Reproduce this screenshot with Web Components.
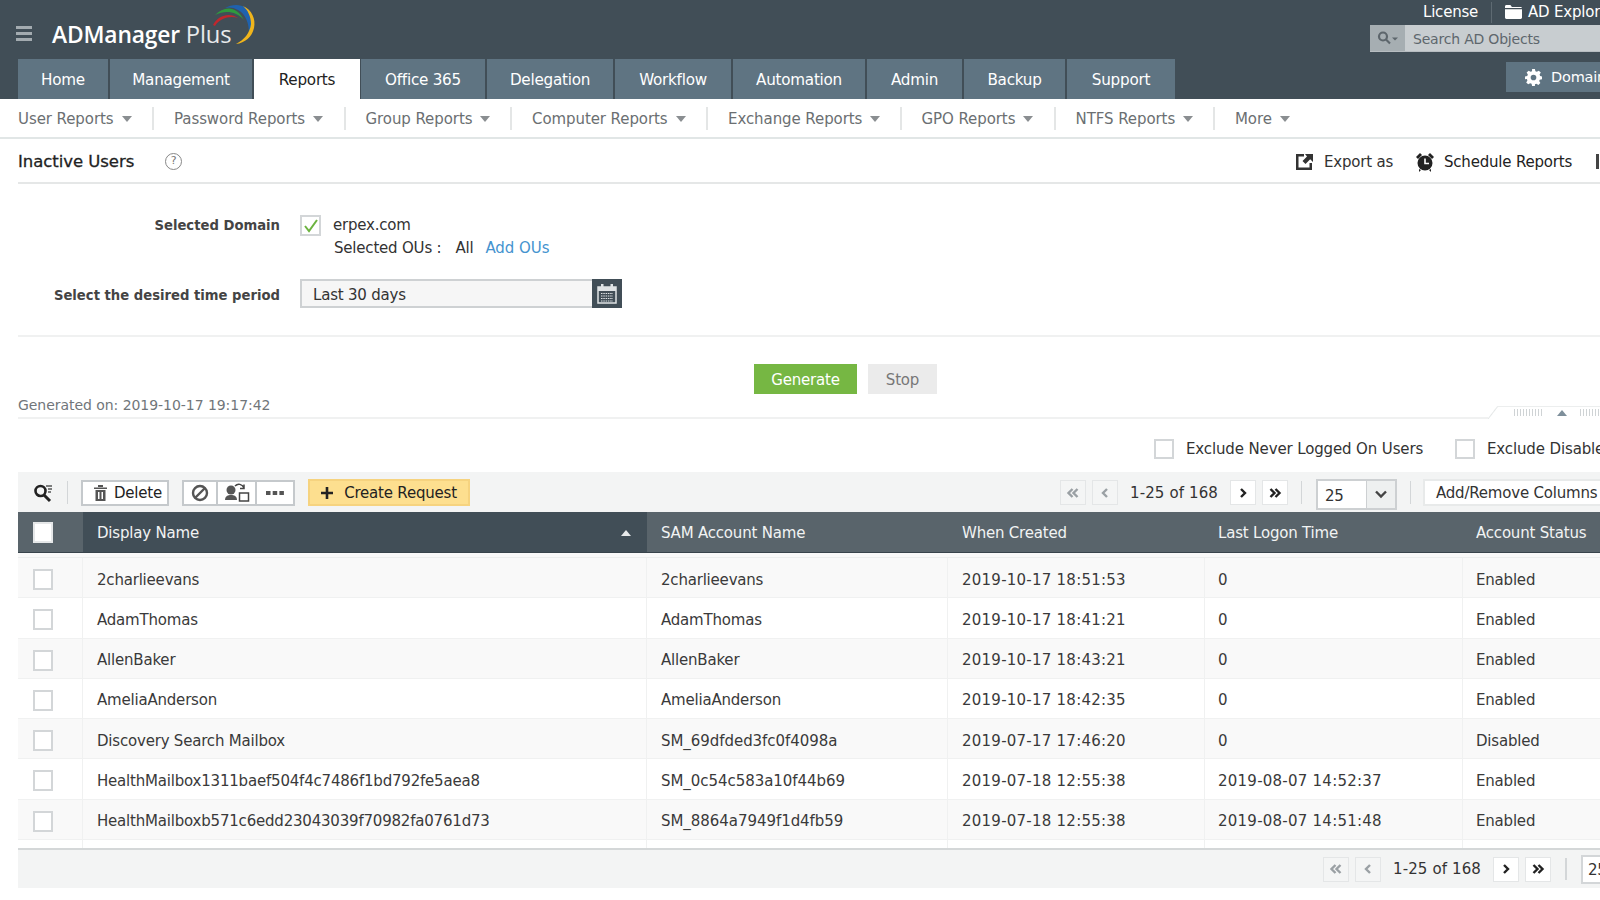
<!DOCTYPE html>
<html lang="en"><head><meta charset="utf-8"><title>ADManager Plus - Inactive Users</title>
<style>
html,body{margin:0;padding:0;background:#fff;width:1600px;height:900px;overflow:hidden}
body{font:15px/1.2 "DejaVu Sans",sans-serif;letter-spacing:-.2px;color:#333}
</style></head><body>
<am-header></am-header>
<am-subnav></am-subnav>
<am-titlebar></am-titlebar>
<am-filter></am-filter>
<am-options></am-options>
<am-toolbar></am-toolbar>
<am-table></am-table>
<am-footer></am-footer>
<script>
const el=(tag,css,html)=>{customElements.define(tag,class extends HTMLElement{constructor(){super();this.attachShadow({mode:'open'}).innerHTML='<style>'+css+'</style>'+(typeof html==='function'?html():html)}})};
const chev=(d,c)=>`<svg width="14" height="12" viewBox="0 0 14 12" fill="none" stroke="${c}" stroke-width="2.4">${d}</svg>`;
const pager=()=>{const a='#9aa0a4',b='#222';return `
<span class="pg dis">${chev('<path d="M6.5 2 2.5 6l4 4M11.5 2l-4 4 4 4"/>',a)}</span>
<span class="pg dis">${chev('<path d="M9 2 5 6l4 4"/>',a)}</span>
<span class="pt">1-25 of 168</span>
<span class="pg">${chev('<path d="M5 2l4 4-4 4"/>',b)}</span>
<span class="pg">${chev('<path d="M2.5 2l4 4-4 4M7.5 2l4 4-4 4"/>',b)}</span>`};
const pagerCss=`.pg{box-sizing:border-box;flex:none;width:26px;height:25px;border:1px solid #e4e6e7;background:#fff;display:flex;align-items:center;justify-content:center}.pg.dis{background:#f4f5f5}.pt{flex:none;width:87px;margin:0 13px 0 12px;white-space:nowrap;color:#333;letter-spacing:.12px}`;

el('am-header',`:host{display:block;height:99px;background:#414e57;overflow:hidden;color:#fff}
.top{display:flex;height:59px}
.burger{margin:25px 0 0 16px;width:16px;height:17px;flex:none;display:flex;flex-direction:column;justify-content:space-between;padding:1px 0;box-sizing:border-box}
.burger i{display:block;height:3px;background:#a3abb0}
.logo{margin:19px 0 0 20px;width:170px;font:600 22.8px/30px "Open Sans",sans-serif;letter-spacing:-.15px;flex:none;white-space:nowrap;height:30px}
.logo span{font-weight:400;font-size:23.8px;color:#e8ebec}
.arc{flex:none;margin:0 0 0 -10px;width:46px;height:46px}
.right{margin-left:auto;flex:0 0 230px;width:230px;overflow:hidden;white-space:nowrap}
.links{display:flex;align-items:center;height:22px;margin-top:1px;margin-left:53px;font-size:15px}
.links b{font-weight:400;width:68px;flex:none}
.links i{flex:none;width:1px;height:21px;background:#5e6a72;margin-right:13px}
.links svg{flex:none;margin-right:6px}
.search{display:flex;height:27px;margin-top:2px;border-bottom:1px solid #b7bdc1;box-sizing:border-box}
.search span{flex:0 0 35px;background:#a6aeb2;display:flex;align-items:center;justify-content:center}
.search em{flex:1;background:#c8cdd0;color:#5e676d;font-style:normal;padding-left:8px;line-height:28px;font-size:14px}
.tabs{display:flex;height:40px;padding-left:18px}
.tab{flex:none;background:#5f7482;margin-right:2px;display:flex;align-items:center;justify-content:center;font-size:15.2px;white-space:nowrap;letter-spacing:-.25px;padding-top:2px;box-sizing:border-box}
.tab.on{background:#fff;color:#222;margin-right:1px}
.dom{margin:3px 0 0 auto;width:94px;height:30px;background:#5f7482;display:flex;align-items:center;overflow:hidden;white-space:nowrap;padding:2px 0 0 19px;box-sizing:border-box;gap:9px;font-size:14.5px;flex:none}
.dom svg{flex:none;margin-top:-2px}
`,()=>`<div class="top"><div class="burger"><i></i><i></i><i></i></div>
<div class="logo">ADManager <span>Plus</span></div>
<svg class="arc" viewBox="0 0 46 46"><path d="M1 25C6 15 18 12 26 18 18 15.500 8 18 3 26Z" fill="#c0272d"/><path d="M3 15C12 6 24 5 32 20 24 11 13 10 3 15Z" fill="#2f9a3e"/><path d="M13 8C24 2 36 5 39 16 41 22 40 28 37 33 37 24 34 14 26 10 21 7 17 7 13 8Z" fill="#1f62ae"/><path d="M31 6C40 10 44 19 42 28 40 37 33 43 24 44 32 40 38 33 39 24 39 17 36 10 31 6Z" fill="#f0b51c"/></svg>
<div class="right"><div class="links"><b>License</b><i></i><svg width="17" height="14" viewBox="0 0 17 14" fill="#fff"><path d="M0 3V1.5C0 .7.6 0 1.4 0h4l1.5 2h8.700C16.400 2 17 2.600 17 3.300V3zM0 4.200h17V12.600c0 .8-.6 1.400-1.400 1.400H1.400C.6 14 0 13.400 0 12.600z"/></svg>AD Explorer</div>
<div class="search"><span><svg width="22" height="14" viewBox="0 0 22 14" fill="none" stroke="#5d666c" stroke-width="2.200"><circle cx="6" cy="5.500" r="4"/><path d="M9 8.500l4 4"/><path d="M15 6.500h6l-3 3z" fill="#5d666c" stroke="none"/></svg></span><em>Search AD Objects</em></div></div></div>
<div class="tabs">${[['Home',90],['Management',142],['Reports',106,1],['Office 365',124],['Delegation',126],['Workflow',116],['Automation',132],['Admin',95],['Backup',101],['Support',108]].map(t=>`<div class="tab${t[2]?' on':''}" style="width:${t[1]}px">${t[0]}</div>`).join('')}
<div class="dom"><svg width="17" height="17" viewBox="0 0 24 24" fill="#fff"><path fill-rule="evenodd" d="M10 0h4l.7 3.200 2 .8L19.500 2.300l2.800 2.800-1.700 2.800.8 2L24 10.600v3.800l-3.200.6-.8 2 1.700 2.800-2.800 2.800-2.800-1.700-2 .8L14 24h-4l-.7-3.200-2-.8-2.800 1.700-2.800-2.800 1.700-2.800-.8-2L0 14.400v-3.800l3.200-.7.8-2L2.300 5.100 5.100 2.300 7.900 4l2-.8zM12 8a4 4 0 1 0 0 8 4 4 0 0 0 0-8z"/></svg>Domain Settings</div></div>`);

el('am-subnav',`:host{display:block;height:40px;border-bottom:2px solid #e1e6e6;box-sizing:border-box;padding-left:18px}
.w{display:flex;align-items:center;height:38px;color:#6b6f72;white-space:nowrap;letter-spacing:-.08px}
.it{display:flex;align-items:center;flex:none;padding-top:2px;box-sizing:border-box}
.it i{width:0;height:0;border:5px solid transparent;border-top:6px solid #8a8e91;border-bottom:0;margin-left:8px}
.s{flex:none;width:2px;height:23px;background:#e4e6e6}`,()=>{
const items=[['User Reports',134],['Password Reports',169.5],['Group Reports',144.5],['Computer Reports',174],['Exchange Reports',171.5],['GPO Reports',132],['NTFS Reports',137.5],['More',0]];
return `<div class="w">${items.map((t,i)=>`<div class="it" style="${t[1]?'width:'+t[1]+'px':''}"><span>${t[0]}</span><i></i></div>${t[1]?'<div class="s"></div><div style="width:20px;flex:none"></div>':''}`).join('')}</div>`});

el('am-titlebar',`:host{display:flex;align-items:center;height:45px;margin-left:18px;border-bottom:2px solid #e5e7e7;padding-top:2px;box-sizing:border-box;white-space:nowrap;color:#222;overflow:hidden}
h1{margin:0;font:inherit;font-size:16.500px;font-weight:400;letter-spacing:-.05px;-webkit-text-stroke:.3px #222;width:147px;flex:none}
.q{flex:none;width:17px;height:17px;border:1.500px solid #888;border-radius:50%;box-sizing:border-box;font-size:11px;color:#777;text-align:center;line-height:14px}
.r{margin-left:auto;display:flex;align-items:center;width:304px;flex:none}
.r svg{flex:none}`,`<h1>Inactive Users</h1><span class="q">?</span>
<div class="r"><svg width="17" height="17" viewBox="0 0 17 17" fill="#333"><path d="M0 1h8v2.500H2.500v11h11V10H16v7H0z"/><path d="M9 1h8v8l-2.800-2.800L9.500 11 6.500 8l4.500-4.500z"/></svg><span style="margin:0 22px 0 11px;color:#333;width:70px;flex:none">Export as</span>
<svg width="18" height="20" viewBox="0 0 18 20" fill="#222"><circle cx="9" cy="11" r="7.500"/><path d="M0 5l4-4 2 2-4 4zM18 5l-4-4-2 2 4 4zM3 17l2 1-2 2zM15 17l-2 1 2 2z"/><path d="M9 6.500V11.500H13" stroke="#fff" stroke-width="1.600" fill="none"/></svg><span style="margin-left:10px;width:131px;flex:none">Schedule Reports</span><i style="width:3px;height:15px;background:#444;margin-left:21px;flex:none"></i></div>`);

el('am-filter',`:host{display:block;margin-left:18px;white-space:nowrap}
.top{height:153px;border-bottom:2px solid #f0f1f1;box-sizing:border-box;position:relative}
.row{display:flex}
.lb{flex:none;width:262px;text-align:right;font-weight:700;color:#444;font-size:13.200px;letter-spacing:0}
.cb{flex:none;box-sizing:border-box;width:21px;height:21px;border:2px solid #d3d6d8;background:#fff;margin:0 12px 0 20px;display:flex;align-items:center;justify-content:center}
.a{color:#4593cf}
.inp{flex:none;box-sizing:border-box;width:292px;height:29px;margin-left:20px;border:2px solid #ced1d3;border-right:0;background:#f6f6f6;line-height:28px;padding-left:11px;color:#333}
.cal{flex:none;width:30px;height:29px;background:#414e57;display:flex;align-items:center;justify-content:center}
.btns{display:flex;justify-content:flex-start;padding-left:736px;height:30px;margin-top:27px}
.btn{flex:none;display:flex;align-items:center;justify-content:center;padding-top:1px;box-sizing:border-box}
.gen{width:103px;background:#76b743;color:#fff}
.stop{width:69px;background:#ebebeb;color:#777;margin-left:11px}
.gn{color:#71767a;font-size:14px;letter-spacing:-.05px;line-height:22px;border-bottom:2px solid #f0f1f1;box-sizing:border-box}
.gw{position:relative}
.col{position:absolute;right:0;bottom:0;width:112px;height:13px;display:flex;align-items:center;padding-left:26px;box-sizing:border-box;background:linear-gradient(#eceeee,#eceeee) 9px 0/103px 1px no-repeat,linear-gradient(to top left,transparent calc(50% - 1px),#e4e7e7 50%,transparent calc(50% + 1px)) 0 0/10px 13px no-repeat,#fff}
.dots{flex:none;width:30px;height:7px;background:repeating-linear-gradient(90deg,#cfd3d5 0 1px,transparent 1px 3px)}
.tri{flex:none;margin:0 13px;width:0;height:0;border:5px solid transparent;border-bottom:6px solid #7e8f9b;border-top:0}`,
`<div class="top"><div class="row" style="padding-top:31px;height:21px"><span class="lb" style="line-height:21px">Selected Domain</span><span class="cb"><svg width="16" height="14" viewBox="0 0 16 14" fill="none" stroke="#6cb33f" stroke-width="2"><path d="M2 7l4 5 8-11"/></svg></span><span style="line-height:21px">erpex.com</span></div>
<div style="padding-left:316px;margin-top:2px;line-height:20px">Selected OUs :<span style="margin-left:14px">All</span><span class="a" style="margin-left:12px;letter-spacing:-.05px">Add OUs</span></div>
<div class="row" style="margin-top:21px;height:29px;align-items:center"><span class="lb" style="padding-top:4px">Select the desired time period</span><span class="inp">Last 30 days</span><span class="cal"><svg width="20" height="20" viewBox="0 0 20 20"><rect x="1" y="3" width="18" height="16" fill="none" stroke="#dfe3e5" stroke-width="1.500"/><rect x="1" y="3" width="18" height="4" fill="#dfe3e5"/><rect x="4" y="0" width="2.500" height="5" fill="#dfe3e5"/><rect x="13.500" y="0" width="2.500" height="5" fill="#dfe3e5"/><path d="M4 9.500h12M4 12h12M4 14.500h12M4 17h12" stroke="#dfe3e5" stroke-width="1.200" stroke-dasharray="1.500 .8"/></svg></span></div></div>
<div class="btns"><span class="btn gen">Generate</span><span class="btn stop">Stop</span></div>
<div class="gw"><div class="gn" style="height:25px">Generated on: 2019-10-17 19:17:42</div><div class="col"><span class="dots"></span><span class="tri"></span><span class="dots"></span></div></div>`);

el('am-options',`:host{display:flex;align-items:center;height:53px;padding:7px 0 0 1154px;box-sizing:border-box;white-space:nowrap;overflow:hidden;letter-spacing:-.13px}
.cb{flex:none;box-sizing:border-box;width:20px;height:20px;border:2px solid #d3d6d8;background:#fff;margin-right:12px}`,
`<span class="cb"></span><span style="width:269px;flex:none">Exclude Never Logged On Users</span><span class="cb"></span><span>Exclude Disabled Users</span>`);

el('am-toolbar',`:host{display:flex;align-items:center;height:40px;margin-left:18px;padding-top:1px;box-sizing:border-box;background:#f3f4f4;white-space:nowrap;overflow:hidden}
.sr{flex:none;margin-left:15px;width:20px}
.sp{flex:none;width:1px;height:23px;background:#d3d6d8}
.b{flex:none;box-sizing:border-box;height:26px;border:2px solid #c5c9cc;background:#fff;display:flex;align-items:center;justify-content:center}
.b+.b{border-left:0}
.c{flex:none;box-sizing:border-box;width:162px;height:27px;margin-left:13px;background:#fddf8f;border:2px solid #f6d37f;color:#222;display:flex;align-items:center;justify-content:center;gap:11px}
.sel{flex:none;box-sizing:border-box;width:81px;height:31px;border:2px solid #cdd0d2;display:flex;background:#fff;margin:3px 13px 0 14px}
.sel span{flex:1;line-height:31px;padding-left:7px}
.sel i{flex:0 0 28px;background:#eef0f0;border-left:1px solid #cdd0d2;display:flex;align-items:center;justify-content:center}
.add{flex:none;box-sizing:border-box;margin-left:12px;width:200px;height:27px;background:#fff;border:2px solid #e8eaea;line-height:25px;padding-left:11px;color:#333}
${pagerCss}
.pg+.pg{margin-left:6px}`,
()=>`<svg class="sr" width="20" height="20" viewBox="0 0 20 20" fill="none" stroke="#222"><circle cx="7.500" cy="8" r="5" stroke-width="2.600"/><path d="M11 12l6 6" stroke-width="3"/><path d="M13 3h6M15 6h4M15 9h3" stroke-width="1.300" stroke="#555"/></svg>
<span class="sp" style="margin:0 13px 0 14px"></span>
<span class="b" style="width:88px;gap:7px;color:#222;padding-left:6px"><svg width="13" height="16" viewBox="0 0 13 16" fill="#555"><path d="M0 2.500h13V4H0zM4 0h5v2H4zM1.500 5h10v11h-10zM4 7v7h1.500V7zM7.500 7v7H9V7z" fill-rule="evenodd"/></svg>Delete</span>
<span style="display:flex;flex:none;margin-left:13px"><span class="b" style="width:36px"><svg width="18" height="18" viewBox="0 0 18 18" fill="none" stroke="#555" stroke-width="2.400"><circle cx="9" cy="9" r="7"/><path d="M4 14 14 4"/></svg></span><span class="b" style="width:39px"><svg width="26" height="20" viewBox="0 0 26 20" fill="none" stroke="#444" stroke-width="1.500"><circle cx="7" cy="7" r="4.500" fill="#555" stroke="none"/><path d="M1 17c0-4 3-5 6-5s6 1 6 5z" fill="#555" stroke="none"/><path d="M11 3c3-3 7-2 9 2M20 1.500V5.500h-4"/><rect x="15.500" y="10" width="9" height="8"/></svg></span><span class="b" style="width:38px"><svg width="18" height="6" viewBox="0 0 18 6" fill="#555"><rect x="0" y="1" width="4.500" height="4"/><rect x="6.700" y="1" width="4.500" height="4"/><rect x="13.400" y="1" width="4.500" height="4"/></svg></span></span>
<span class="c"><svg width="12" height="12" viewBox="0 0 12 12" fill="#222"><path d="M4.700 0h2.600v4.700H12v2.600H7.300V12H4.700V7.300H0V4.700h4.700z"/></svg>Create Request</span>
<span style="flex:none;width:590px"></span>${pager()}
<span class="sp" style="margin-left:13px"></span><span class="sel"><span>25</span><i>${chev('<path d="M2 3.500l5 5 5-5"/>','#444')}</i></span><span class="sp" style="margin:0"></span><span class="add">Add/Remove Columns</span>`);

el('am-table',`:host{display:block;margin-left:18px;height:338px;overflow:hidden;border-bottom:2px solid #d4d7d8;box-sizing:border-box;white-space:nowrap}
.g{display:grid;grid-template-columns:65px 564px 301px 257px 258px 150px;grid-auto-rows:40.280px}
.h{display:flex;align-items:center;height:41px;background:#59646b;color:#f1f3f3;padding:2px 0 0 14px;border-bottom:1px solid #38434b;box-sizing:border-box}
.h.f{padding:0 0 0 15px}.h.s{background:#414e57;justify-content:space-between;padding-right:16px}
.h.s i{width:0;height:0;border:5px solid transparent;border-bottom:6px solid #e8eaeb;border-top:0}
.h.n{padding-left:13px}
.gap{grid-column:1/-1;height:5px;background:#f9f9f9;border-bottom:1px solid #eceeee;box-sizing:border-box}
.c{display:flex;align-items:center;padding:4px 0 0 14px;border-right:1px solid #f0f1f1;border-bottom:1px solid #f0f1f1;box-sizing:border-box;color:#3a3a3a;overflow:hidden}
.c.f{padding:4px 0 0 15px}.o{background:#f9f9f9}.d{letter-spacing:.24px}.n{padding-left:13px}.m{letter-spacing:-.05px}
.cb{flex:none;box-sizing:border-box;width:20px;height:21px;border:2px solid #d3d6d8;background:#fff}
.hd{display:grid;grid-template-columns:65px 564px 301px 257px 258px 150px}
.h .cb{border-color:#e5e7e8}`,()=>{
const rows=[['2charlieevans','2charlieevans','2019-10-17 18:51:53','0','Enabled'],['AdamThomas','AdamThomas','2019-10-17 18:41:21','0','Enabled'],['AllenBaker','AllenBaker','2019-10-17 18:43:21','0','Enabled'],['AmeliaAnderson','AmeliaAnderson','2019-10-17 18:42:35','0','Enabled'],['Discovery Search Mailbox','SM_69dfded3fc0f4098a','2019-07-17 17:46:20','0','Disabled'],['HealthMailbox1311baef504f4c7486f1bd792fe5aea8','SM_0c54c583a10f44b69','2019-07-18 12:55:38','2019-08-07 14:52:37','Enabled'],['HealthMailboxb571c6edd23043039f70982fa0761d73','SM_8864a7949f1d4fb59','2019-07-18 12:55:38','2019-08-07 14:51:48','Enabled'],['','','','','']];
const cls=(t,j)=>[j==2||j==3?'d':'',j>=3?'n':'',t.startsWith('SM_')?'m':''].join(' ');
return `<div class="hd"><div class="h f"><span class="cb"></span></div><div class="h s"><span>Display Name</span><i></i></div>${['SAM Account Name','When Created','Last Logon Time','Account Status'].map((t,j)=>`<div class="h${j>1?' n':''}">${t}</div>`).join('')}</div><div class="gap"></div>
<div class="g">${rows.map((r,i)=>`<div class="c f ${i%2?'':'o'}">${r[0]?'<span class="cb"></span>':''}</div>${r.map((t,j)=>`<div class="c ${i%2?'':'o'} ${cls(t,j)}">${t}</div>`).join('')}`).join('')}</div>`});

el('am-footer',`:host{display:flex;align-items:center;height:38px;margin-left:18px;background:#f3f4f4;white-space:nowrap;overflow:hidden;padding-left:1305px}
${pagerCss}.pg+.pg{margin-left:6px}
.sp{flex:none;width:2px;height:22px;background:#d3d6d8;margin-left:14px}
.sel{flex:none;box-sizing:border-box;width:60px;height:29px;border:2px solid #d3d6d8;background:#fff;margin-left:14px;line-height:27px;padding-left:5px}`,()=>pager()+`<span class="sp"></span><span class="sel">25</span>`);
</script></body></html>
